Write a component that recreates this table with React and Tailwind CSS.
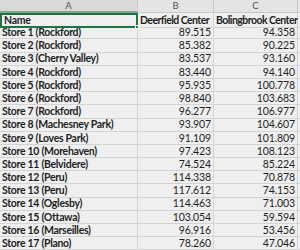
const rows = [
  ["Store 1 (Rockford)", "89.515", "94.358"],
  ["Store 2 (Rockford)", "85.382", "90.225"],
  ["Store 3 (Cherry Valley)", "83.537", "93.160"],
  ["Store 4 (Rockford)", "83.440", "94.140"],
  ["Store 5 (Rockford)", "95.935", "100.778"],
  ["Store 6 (Rockford)", "98.840", "103.683"],
  ["Store 7 (Rockford)", "96.277", "106.977"],
  ["Store 8 (Machesney Park)", "93.907", "104.607"],
  ["Store 9 (Loves Park)", "91.109", "101.809"],
  ["Store 10 (Morehaven)", "97.423", "108.123"],
  ["Store 11 (Belvidere)", "74.524", "85.224"],
  ["Store 12 (Peru)", "114.338", "70.878"],
  ["Store 13 (Peru)", "117.612", "74.153"],
  ["Store 14 (Oglesby)", "114.463", "71.003"],
  ["Store 15 (Ottawa)", "103.054", "59.594"],
  ["Store 16 (Marseilles)", "96.916", "53.456"],
  ["Store 17 (Plano)", "78.260", "47.046"],
];

const cols = "grid grid-cols-[138px_76px_84px_2px]";

export default function App() {
  return (
    <div className="w-[300px] h-[250px] overflow-hidden bg-[#efefef] text-[#1e1e1e] text-[10.5px] font-['Lato','Liberation_Sans',sans-serif] leading-none">
      {/* column letters */}
      <div className={`${cols} h-[13px] bg-[#e4e4e4] text-[#555] text-[9.5px]`}>
        <div className="flex items-center justify-center border-r border-b-2 border-r-[#c8c8c8] border-b-[#7fa88e] bg-[#d9d9d9]">A</div>
        <div className="flex items-center justify-center border-r border-b border-[#c8c8c8]">B</div>
        <div className="flex items-center justify-center border-r border-b border-[#c8c8c8]">C</div>
        <div className="border-b border-[#c8c8c8]"></div>
      </div>
      {/* header row */}
      <div className={`${cols} h-[13.2px] font-bold tracking-[-0.55px]`}>
        <div className="relative flex items-center pl-[2px] border-2 border-[#217346] tracking-[-0.3px]">
          Name
          <span className="absolute -right-[3px] -bottom-[3px] w-[4px] h-[4px] bg-[#217346] border border-white"></span>
        </div>
        <div className="flex items-center pl-[2px] border-r border-b border-[#d4d4d4] whitespace-nowrap">Deerfield Center</div>
        <div className="flex items-center pl-[2px] border-r border-b border-[#d4d4d4] whitespace-nowrap">Bolingbrook Center</div>
        <div className="border-b border-[#d4d4d4]"></div>
      </div>
      {rows.map(([name, b, c]) => (
        <div key={name} className={`${cols} h-[13.2px]`}>
          <div className="flex items-center pl-[2px] border-r border-b border-[#d4d4d4] whitespace-nowrap font-bold tracking-[-0.3px]">{name}</div>
          <div className="flex items-center justify-end pr-[2px] border-r border-b border-[#d4d4d4] tracking-[-0.1px]">{b}</div>
          <div className="flex items-center justify-end pr-[2px] border-r border-b border-[#d4d4d4] tracking-[-0.1px]">{c}</div>
          <div className="border-b border-[#d4d4d4]"></div>
        </div>
      ))}
    </div>
  );
}
